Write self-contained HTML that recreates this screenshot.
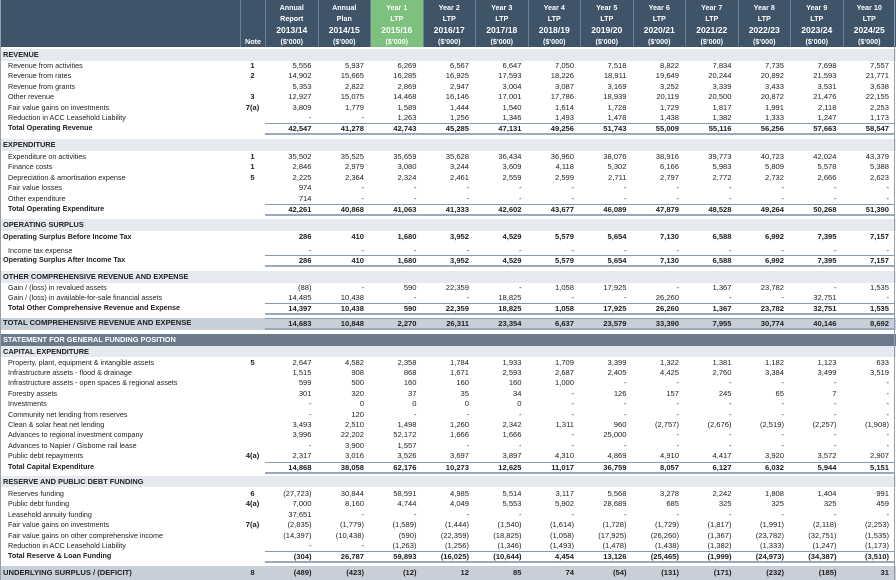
<!DOCTYPE html>
<html><head><meta charset="utf-8"><style>
*{margin:0;padding:0;box-sizing:border-box}
body{width:896px;height:580px;overflow:hidden;background:#fff;font-family:"Liberation Sans",Arial,sans-serif;color:#222;position:relative}
.r{position:absolute;left:0;width:896px;height:10px;display:grid;grid-template-columns:240px 25px repeat(12,52.5px);font-size:7.2px;line-height:10px;white-space:nowrap}
.r>span{display:block;text-align:right;padding-right:6px;font-size:7.6px}
.r>span:first-child{text-align:left;padding-left:8px;font-size:7.2px}
.r>span:nth-child(2){text-align:center;padding:0;font-weight:bold}
.b>span{font-weight:bold}
.t>span:nth-child(n+3){border-top:1px solid #8a9aac;border-bottom:2px solid #9aaabb;line-height:9px}
.t{height:12px}
.h{position:absolute;left:0;width:896px;height:12px;background:#e6e9ed;font-size:7.4px;font-weight:bold;line-height:12px;padding-left:3px}
.bnd{position:absolute;left:0;width:896px}
.hdr{position:absolute;left:0;top:0;width:896px;height:47px;background:#3f5468;display:grid;grid-template-columns:240px 25px repeat(12,52.5px);color:#fff;font-weight:bold}
.hdr>div{border-left:1px solid #6d8094;text-align:center;font-size:7.2px;line-height:11px;padding-top:2px}
.hdr>div b{display:block;font-size:8.6px;line-height:12px}
.hdr>div.g{background:#7ec07d}
.n{padding:0 !important;padding-top:36px !important}
.edge{position:absolute;top:0;right:1px;width:1px;height:580px;background:#8fa0b0}
.ledge{position:absolute;top:0;left:0;width:1px;height:580px;background:#8fa0b0}
</style></head><body>
<div class="hdr">
<div style="border-left:none"></div>
<div class="n">Note</div>
<div>Annual<br>Report<b>2013/14</b>($'000)</div>
<div>Annual<br>Plan<b>2014/15</b>($'000)</div>
<div class="g">Year 1<br>LTP<b>2015/16</b>($'000)</div>
<div>Year 2<br>LTP<b>2016/17</b>($'000)</div>
<div>Year 3<br>LTP<b>2017/18</b>($'000)</div>
<div>Year 4<br>LTP<b>2018/19</b>($'000)</div>
<div>Year 5<br>LTP<b>2019/20</b>($'000)</div>
<div>Year 6<br>LTP<b>2020/21</b>($'000)</div>
<div>Year 7<br>LTP<b>2021/22</b>($'000)</div>
<div>Year 8<br>LTP<b>2022/23</b>($'000)</div>
<div>Year 9<br>LTP<b>2023/24</b>($'000)</div>
<div>Year 10<br>LTP<b>2024/25</b>($'000)</div>
</div>

<div class="h" style="top:49px">REVENUE</div>
<div class="r" style="top:61px"><span>Revenue from activities</span><span>1</span><span>5,556</span><span>5,937</span><span>6,269</span><span>6,567</span><span>6,647</span><span>7,050</span><span>7,518</span><span>8,822</span><span>7,834</span><span>7,735</span><span>7,698</span><span>7,557</span></div>
<div class="r" style="top:71.4px"><span>Revenue from rates</span><span>2</span><span>14,902</span><span>15,665</span><span>16,285</span><span>16,925</span><span>17,593</span><span>18,226</span><span>18,911</span><span>19,649</span><span>20,244</span><span>20,892</span><span>21,593</span><span>21,771</span></div>
<div class="r" style="top:81.8px"><span>Revenue from grants</span><span></span><span>5,353</span><span>2,822</span><span>2,869</span><span>2,947</span><span>3,004</span><span>3,087</span><span>3,169</span><span>3,252</span><span>3,339</span><span>3,433</span><span>3,531</span><span>3,638</span></div>
<div class="r" style="top:92.2px"><span>Other revenue</span><span>3</span><span>12,927</span><span>15,075</span><span>14,468</span><span>16,146</span><span>17,001</span><span>17,786</span><span>18,939</span><span>20,119</span><span>20,500</span><span>20,872</span><span>21,476</span><span>22,155</span></div>
<div class="r" style="top:102.6px"><span>Fair value gains on investments</span><span>7(a)</span><span>3,809</span><span>1,779</span><span>1,589</span><span>1,444</span><span>1,540</span><span>1,614</span><span>1,728</span><span>1,729</span><span>1,817</span><span>1,991</span><span>2,118</span><span>2,253</span></div>
<div class="r" style="top:113px"><span>Reduction in ACC Leasehold Liability</span><span></span><span>-</span><span>-</span><span>1,263</span><span>1,256</span><span>1,346</span><span>1,493</span><span>1,478</span><span>1,438</span><span>1,382</span><span>1,333</span><span>1,247</span><span>1,173</span></div>
<div class="r b t" style="top:123px"><span>Total Operating Revenue</span><span></span><span>42,547</span><span>41,278</span><span>42,743</span><span>45,285</span><span>47,131</span><span>49,256</span><span>51,743</span><span>55,009</span><span>55,116</span><span>56,256</span><span>57,663</span><span>58,547</span></div>

<div class="h" style="top:139px">EXPENDITURE</div>
<div class="r" style="top:152px"><span>Expenditure on activities</span><span>1</span><span>35,502</span><span>35,525</span><span>35,659</span><span>35,628</span><span>36,434</span><span>36,960</span><span>38,076</span><span>38,916</span><span>39,773</span><span>40,723</span><span>42,024</span><span>43,379</span></div>
<div class="r" style="top:162.4px"><span>Finance costs</span><span>1</span><span>2,846</span><span>2,979</span><span>3,080</span><span>3,244</span><span>3,609</span><span>4,118</span><span>5,302</span><span>6,166</span><span>5,983</span><span>5,809</span><span>5,578</span><span>5,388</span></div>
<div class="r" style="top:172.8px"><span>Depreciation &amp; amortisation expense</span><span>5</span><span>2,225</span><span>2,364</span><span>2,324</span><span>2,461</span><span>2,559</span><span>2,599</span><span>2,711</span><span>2,797</span><span>2,772</span><span>2,732</span><span>2,666</span><span>2,623</span></div>
<div class="r" style="top:183.2px"><span>Fair value losses</span><span></span><span>974</span><span>-</span><span>-</span><span>-</span><span>-</span><span>-</span><span>-</span><span>-</span><span>-</span><span>-</span><span>-</span><span>-</span></div>
<div class="r" style="top:193.6px"><span>Other expenditure</span><span></span><span>714</span><span>-</span><span>-</span><span>-</span><span>-</span><span>-</span><span>-</span><span>-</span><span>-</span><span>-</span><span>-</span><span>-</span></div>
<div class="r b t" style="top:204px"><span>Total Operating Expenditure</span><span></span><span>42,261</span><span>40,868</span><span>41,063</span><span>41,333</span><span>42,602</span><span>43,677</span><span>46,089</span><span>47,879</span><span>48,528</span><span>49,264</span><span>50,268</span><span>51,390</span></div>

<div class="h" style="top:219px">OPERATING SURPLUS</div>
<div class="r b" style="top:232px"><span style="padding-left:3px">Operating Surplus Before Income Tax</span><span></span><span>286</span><span>410</span><span>1,680</span><span>3,952</span><span>4,529</span><span>5,579</span><span>5,654</span><span>7,130</span><span>6,588</span><span>6,992</span><span>7,395</span><span>7,157</span></div>
<div class="r" style="top:246px"><span>Income tax expense</span><span></span><span>-</span><span>-</span><span>-</span><span>-</span><span>-</span><span>-</span><span>-</span><span>-</span><span>-</span><span>-</span><span>-</span><span>-</span></div>
<div class="r b t" style="top:255px"><span style="padding-left:3px">Operating Surplus After Income Tax</span><span></span><span>286</span><span>410</span><span>1,680</span><span>3,952</span><span>4,529</span><span>5,579</span><span>5,654</span><span>7,130</span><span>6,588</span><span>6,992</span><span>7,395</span><span>7,157</span></div>

<div class="h" style="top:271px">OTHER COMPREHENSIVE REVENUE AND EXPENSE</div>
<div class="r" style="top:283px"><span>Gain / (loss) in revalued assets</span><span></span><span>(88)</span><span>-</span><span>590</span><span>22,359</span><span>-</span><span>1,058</span><span>17,925</span><span>-</span><span>1,367</span><span>23,782</span><span>-</span><span>1,535</span></div>
<div class="r" style="top:293.4px"><span>Gain / (loss) in available-for-sale financial assets</span><span></span><span>14,485</span><span>10,438</span><span>-</span><span>-</span><span>18,825</span><span>-</span><span>-</span><span>26,260</span><span>-</span><span>-</span><span>32,751</span><span>-</span></div>
<div class="r b t" style="top:303px"><span>Total Other Comprehensive Revenue and Expense</span><span></span><span>14,397</span><span>10,438</span><span>590</span><span>22,359</span><span>18,825</span><span>1,058</span><span>17,925</span><span>26,260</span><span>1,367</span><span>23,782</span><span>32,751</span><span>1,535</span></div>

<div class="bnd" style="top:318px;height:12px;background:#c8cfd9"></div>
<div class="r b t" style="top:318px;font-size:7.6px"><span style="padding-left:3px;font-size:7.6px">TOTAL COMPREHENSIVE REVENUE AND EXPENSE</span><span></span><span>14,683</span><span>10,848</span><span>2,270</span><span>26,311</span><span>23,354</span><span>6,637</span><span>23,579</span><span>33,390</span><span>7,955</span><span>30,774</span><span>40,146</span><span>8,692</span></div>

<div class="h" style="top:334px;height:12px;background:#6b7b8c;color:#fff">STATEMENT FOR GENERAL FUNDING POSITION</div>
<div class="h" style="top:346px;height:11px;line-height:11px">CAPITAL EXPENDITURE</div>
<div class="r" style="top:357.5px"><span>Property, plant, equipment &amp; intangible assets</span><span>5</span><span>2,647</span><span>4,582</span><span>2,358</span><span>1,784</span><span>1,933</span><span>1,709</span><span>3,399</span><span>1,322</span><span>1,381</span><span>1,182</span><span>1,123</span><span>633</span></div>
<div class="r" style="top:368px"><span>Infrastructure assets - flood &amp; drainage</span><span></span><span>1,515</span><span>908</span><span>868</span><span>1,671</span><span>2,593</span><span>2,687</span><span>2,405</span><span>4,425</span><span>2,760</span><span>3,384</span><span>3,499</span><span>3,519</span></div>
<div class="r" style="top:378.4px"><span>Infrastructure assets - open spaces &amp; regional assets</span><span></span><span>599</span><span>500</span><span>160</span><span>160</span><span>160</span><span>1,000</span><span>-</span><span>-</span><span>-</span><span>-</span><span>-</span><span>-</span></div>
<div class="r" style="top:388.8px"><span>Forestry assets</span><span></span><span>301</span><span>320</span><span>37</span><span>35</span><span>34</span><span>-</span><span>126</span><span>157</span><span>245</span><span>65</span><span>7</span><span>-</span></div>
<div class="r" style="top:399.2px"><span>Investments</span><span></span><span>-</span><span>0</span><span>0</span><span>0</span><span>0</span><span>-</span><span>-</span><span>-</span><span>-</span><span>-</span><span>-</span><span>-</span></div>
<div class="r" style="top:409.6px"><span>Community net lending from reserves</span><span></span><span>-</span><span>120</span><span>-</span><span>-</span><span>-</span><span>-</span><span>-</span><span>-</span><span>-</span><span>-</span><span>-</span><span>-</span></div>
<div class="r" style="top:420px"><span>Clean &amp; solar heat net lending</span><span></span><span>3,493</span><span>2,510</span><span>1,498</span><span>1,260</span><span>2,342</span><span>1,311</span><span>960</span><span>(2,757)</span><span>(2,676)</span><span>(2,519)</span><span>(2,257)</span><span>(1,908)</span></div>
<div class="r" style="top:430.4px"><span>Advances to regional investment company</span><span></span><span>3,996</span><span>22,202</span><span>52,172</span><span>1,666</span><span>1,666</span><span>-</span><span>25,000</span><span>-</span><span>-</span><span>-</span><span>-</span><span>-</span></div>
<div class="r" style="top:440.8px"><span>Advances to Napier / Gisborne rail lease</span><span></span><span>-</span><span>3,900</span><span>1,557</span><span>-</span><span>-</span><span>-</span><span>-</span><span>-</span><span>-</span><span>-</span><span>-</span><span>-</span></div>
<div class="r" style="top:451.2px"><span>Public debt repayments</span><span>4(a)</span><span>2,317</span><span>3,016</span><span>3,526</span><span>3,697</span><span>3,897</span><span>4,310</span><span>4,869</span><span>4,910</span><span>4,417</span><span>3,920</span><span>3,572</span><span>2,907</span></div>
<div class="r b t" style="top:461.5px"><span>Total Capital Expenditure</span><span></span><span>14,868</span><span>38,058</span><span>62,176</span><span>10,273</span><span>12,625</span><span>11,017</span><span>36,759</span><span>8,057</span><span>6,127</span><span>6,032</span><span>5,944</span><span>5,151</span></div>

<div class="h" style="top:476px;height:11px;line-height:11px">RESERVE AND PUBLIC DEBT FUNDING</div>
<div class="r" style="top:489px"><span>Reserves funding</span><span>6</span><span>(27,723)</span><span>30,844</span><span>58,591</span><span>4,985</span><span>5,514</span><span>3,117</span><span>5,568</span><span>3,278</span><span>2,242</span><span>1,808</span><span>1,404</span><span>991</span></div>
<div class="r" style="top:499.4px"><span>Public debt funding</span><span>4(a)</span><span>7,000</span><span>8,160</span><span>4,744</span><span>4,049</span><span>5,553</span><span>5,902</span><span>28,689</span><span>685</span><span>325</span><span>325</span><span>325</span><span>459</span></div>
<div class="r" style="top:509.8px"><span>Leasehold annuity funding</span><span></span><span>37,651</span><span>-</span><span>-</span><span>-</span><span>-</span><span>-</span><span>-</span><span>-</span><span>-</span><span>-</span><span>-</span><span>-</span></div>
<div class="r" style="top:520.2px"><span>Fair value gains on investments</span><span>7(a)</span><span>(2,835)</span><span>(1,779)</span><span>(1,589)</span><span>(1,444)</span><span>(1,540)</span><span>(1,614)</span><span>(1,728)</span><span>(1,729)</span><span>(1,817)</span><span>(1,991)</span><span>(2,118)</span><span>(2,253)</span></div>
<div class="r" style="top:530.6px"><span>Fair value gains on other comprehensive income</span><span></span><span>(14,397)</span><span>(10,438)</span><span>(590)</span><span>(22,359)</span><span>(18,825)</span><span>(1,058)</span><span>(17,925)</span><span>(26,260)</span><span>(1,367)</span><span>(23,782)</span><span>(32,751)</span><span>(1,535)</span></div>
<div class="r" style="top:541px"><span>Reduction in ACC Leasehold Liability</span><span></span><span>-</span><span>-</span><span>(1,263)</span><span>(1,256)</span><span>(1,346)</span><span>(1,493)</span><span>(1,478)</span><span>(1,438)</span><span>(1,382)</span><span>(1,333)</span><span>(1,247)</span><span>(1,173)</span></div>
<div class="r b t" style="top:551px"><span>Total Reserve &amp; Loan Funding</span><span></span><span>(304)</span><span>26,787</span><span>59,893</span><span>(16,025)</span><span>(10,644)</span><span>4,454</span><span>13,126</span><span>(25,465)</span><span>(1,999)</span><span>(24,973)</span><span>(34,387)</span><span>(3,510)</span></div>

<div class="bnd" style="top:566px;height:14px;background:#c8cfd9"></div>
<div class="r b" style="top:568px"><span style="padding-left:3px;font-size:7.6px">UNDERLYING SURPLUS / (DEFICIT)</span><span>8</span><span>(489)</span><span>(423)</span><span>(12)</span><span>12</span><span>85</span><span>74</span><span>(54)</span><span>(131)</span><span>(171)</span><span>(232)</span><span>(185)</span><span>31</span></div>

<div class="edge"></div><div class="ledge"></div>
</body></html>
